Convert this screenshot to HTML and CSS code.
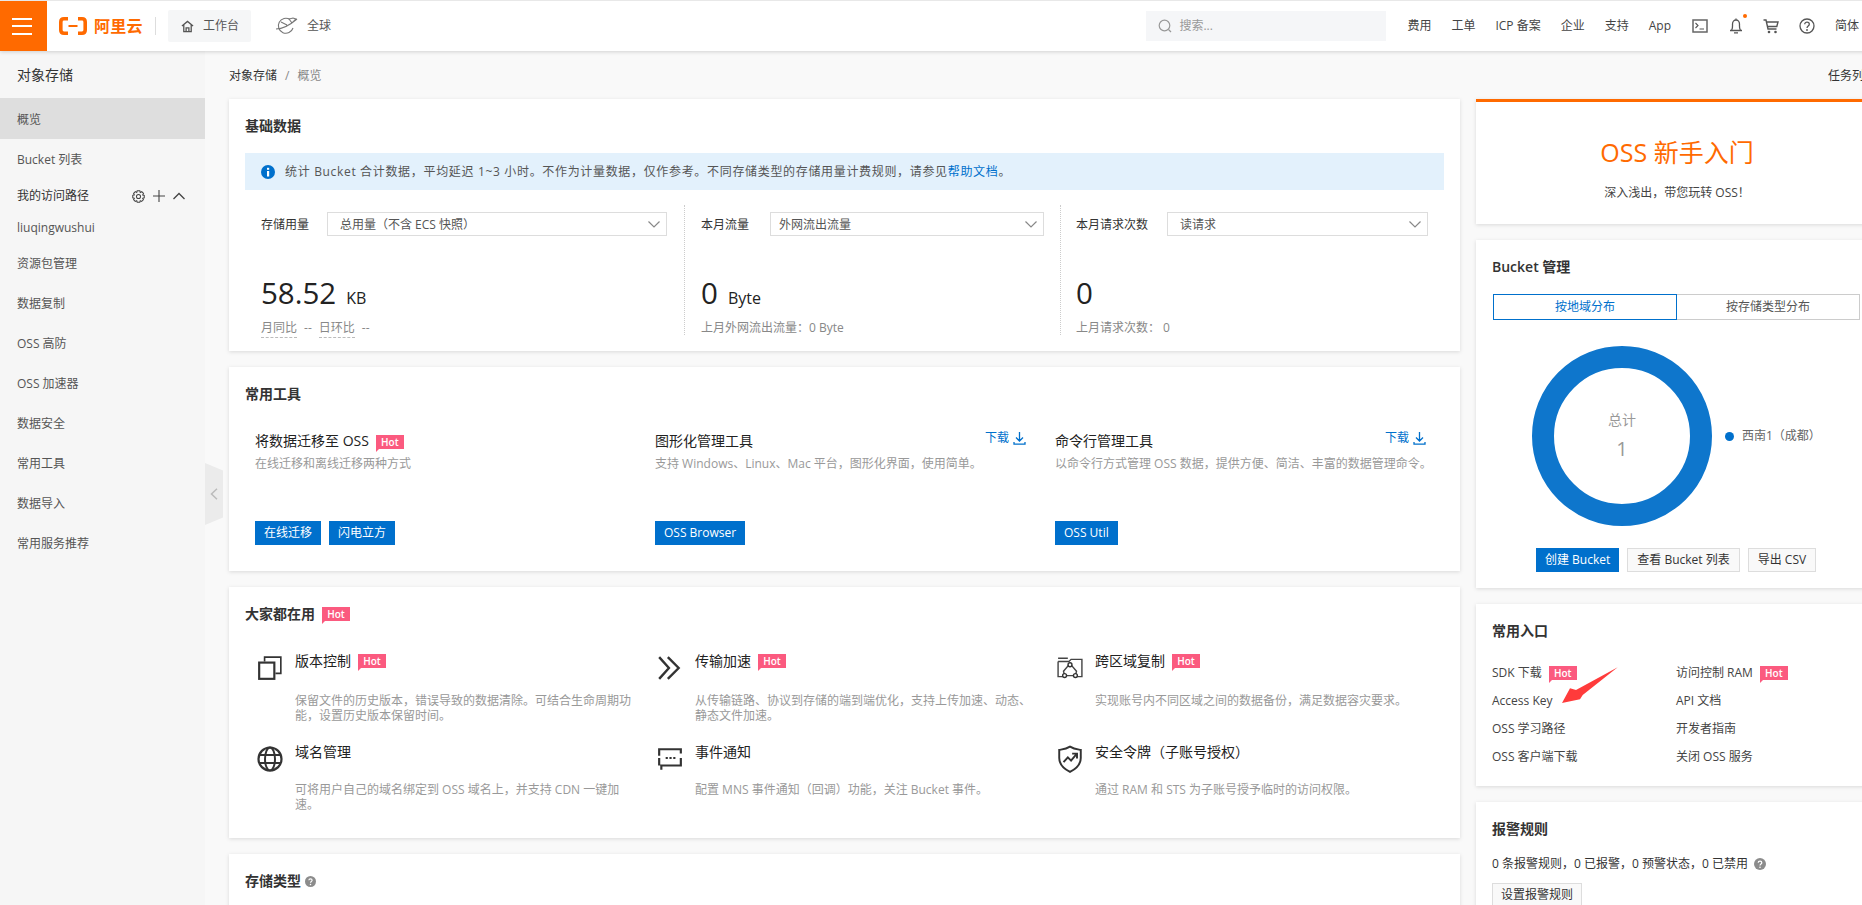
FILE: index.html
```html
<!DOCTYPE html>
<html lang="zh-CN">
<head>
<meta charset="utf-8">
<title>对象存储 - 概览</title>
<link rel="stylesheet" href="styles.css">
</head>
<body>
<header class="topbar">
  <div class="menu-btn"><i></i><i></i><i></i></div>
  <div class="logo">
    <svg class="logo-mark" viewBox="0 0 28 18" width="28" height="18"><path d="M9 1.800H5Q1.800 1.800 1.800 5V13Q1.800 16.200 5 16.200H9M19 1.800H23Q26.200 1.800 26.200 5V13Q26.200 16.200 23 16.200H19" fill="none" stroke="#ff6a00" stroke-width="3.600"/><rect x="9.500" y="8" width="9" height="2" fill="#ff6a00"/></svg>
    <span class="logo-text">阿里云</span>
  </div>
  <div class="logo-sep"></div>
  <div class="workbench">
    <svg viewBox="0 0 14 14" width="13" height="13"><path d="M1 6.500 7 1.500 13 6.500M3 5.500V12.500H11V5.500M5.500 12.500V8.500H8.500V12.500" fill="none" stroke="#555" stroke-width="1.400"/></svg>
    <span>工作台</span>
  </div>
  <div class="region">
    <svg viewBox="0 0 24 20" width="24" height="20"><path d="M15 3.500A7.500 7.500 0 1 0 18 12" fill="none" stroke="#777" stroke-width="1.100"/><path d="M1 13C7 13 15 9 22 3M6 6l6 3M14 3l3 4 4-4-3-1z" fill="none" stroke="#777" stroke-width="1.100"/></svg>
    <span>全球</span>
  </div>
  <div class="search">
    <svg viewBox="0 0 14 14" width="14" height="14"><circle cx="6.500" cy="6.500" r="5.300" fill="none" stroke="#999" stroke-width="1.200"/><path d="M10.500 10.500 13 13" stroke="#999" stroke-width="1.200"/></svg>
    <span>搜索...</span>
  </div>
  <nav class="topnav">
    <a>费用</a><a>工单</a><a>ICP 备案</a><a>企业</a><a>支持</a><a>App</a>
    <svg class="ti ti-term" viewBox="0 0 16 14" width="16" height="14"><rect x="1" y="1" width="14" height="12" fill="none" stroke="#666" stroke-width="1.500"/><path d="M3.500 4 6 6.500 3.500 9M7.500 10H12" fill="none" stroke="#555" stroke-width="1.100"/></svg>
    <span class="bell">
      <svg viewBox="0 0 14 16" width="14" height="16"><path d="M1 12.500H13M2.500 12.500C4 10 3.500 8 3.500 6A3.500 4 0 0 1 10.500 6C10.500 8 10 10 11.500 12.500M5 14.800H9M7 .5V2" fill="none" stroke="#555" stroke-width="1.300"/></svg>
      <i class="bell-dot"></i>
    </span>
    <svg class="ti ti-cart" viewBox="0 0 16 15" width="16" height="15"><path d="M.5 1H3L5 10H13.500M3.500 3H15L13.800 7.500H4.500" fill="none" stroke="#555" stroke-width="1.400"/><circle cx="6" cy="13" r="1.300" fill="#555"/><circle cx="12.500" cy="13" r="1.300" fill="#555"/></svg>
    <svg class="ti ti-help" viewBox="0 0 16 16" width="16" height="16"><circle cx="8" cy="8" r="7" fill="none" stroke="#555" stroke-width="1.300"/><path d="M5.700 6.200C5.700 3.500 10.300 3.500 10.300 6.200C10.300 8 8 8 8 10" fill="none" stroke="#555" stroke-width="1.300"/><circle cx="8" cy="12" r=".9" fill="#555"/></svg>
    <a class="lang">简体</a>
  </nav>
</header>

<div class="shell">
  <aside class="sidebar">
    <div class="side-title">对象存储</div>
    <div class="side-active">概览</div>
    <div class="side-bucket">Bucket 列表</div>
    <div class="side-path">
      <span>我的访问路径</span>
      <span class="side-tools">
        <svg viewBox="0 0 14 14" width="13" height="13"><path d="M5.600.8H8.400L8.900 2.600 10.500 1.800 12.400 3.700 11.500 5.300 13.200 5.800V8.400L11.500 8.900 12.300 10.500 10.400 12.300 8.900 11.500 8.400 13.200H5.600L5.100 11.500 3.500 12.300 1.700 10.400 2.500 8.900.8 8.400V5.700L2.500 5.200 1.700 3.600 3.600 1.700 5.100 2.600Z" fill="none" stroke="#444" stroke-width="1.100"/><circle cx="7" cy="7" r="2.200" fill="none" stroke="#444" stroke-width="1.100"/></svg>
        <svg viewBox="0 0 12 12" width="12" height="12"><path d="M6 0V12M0 6H12" stroke="#444" stroke-width="1.100"/></svg>
        <svg viewBox="0 0 12 8" width="12" height="8"><path d="M.5 7 6 1.500 11.500 7" fill="none" stroke="#444" stroke-width="1.300"/></svg>
      </span>
    </div>
    <div class="side-user">liuqingwushui</div>
    <div class="side-item">资源包管理</div>
    <div class="side-item">数据复制</div>
    <div class="side-item">OSS 高防</div>
    <div class="side-item">OSS 加速器</div>
    <div class="side-item">数据安全</div>
    <div class="side-item">常用工具</div>
    <div class="side-item">数据导入</div>
    <div class="side-item">常用服务推荐</div>
    <div class="collapse">
      <svg viewBox="0 0 8 12" width="8" height="12"><path d="M7 .8 1.500 6 7 11.200" fill="none" stroke="#bbb" stroke-width="1.500"/></svg>
    </div>
  </aside>

  <main class="main">
    <div class="crumbs">
      <div><span>对象存储</span><span class="crumb-sep">/</span><span class="crumb-now">概览</span></div>
      <span>任务列表</span>
    </div>
    <div class="columns">
      <div class="col-left">
        <section class="card">
          <h2 class="card-title">基础数据</h2>
          <div class="alert">
            <svg viewBox="0 0 14 14" width="14" height="14"><circle cx="7" cy="7" r="7" fill="#0070cc"/><rect x="6" y="6" width="2.200" height="5.500" fill="#fff"/><rect x="6" y="2.800" width="2.200" height="2" fill="#fff"/></svg>
            <span class="alert-text">统计 Bucket 合计数据，平均延迟 1~3 小时。不作为计量数据，仅作参考。不同存储类型的存储用量计费规则，请参见<a class="link">帮助文档</a>。</span>
          </div>
          <div class="stats">
            <div class="stat stat-a">
              <div class="stat-head">
                <span class="stat-label label-a">存储用量</span>
                <div class="select"><span>总用量（不含 ECS 快照）</span><svg viewBox="0 0 12 7" width="12" height="7"><path d="M.5.5 6 6 11.500.5" fill="none" stroke="#888" stroke-width="1.200"/></svg></div>
              </div>
              <div class="stat-num">58.52<small>KB</small></div>
              <div class="stat-sub"><u>月同比</u><span class="dash">--</span><u>日环比</u><span class="dash">--</span></div>
            </div>
            <div class="stat stat-b">
              <div class="stat-head">
                <span class="stat-label label-b">本月流量</span>
                <div class="select select-b"><span>外网流出流量</span><svg viewBox="0 0 12 7" width="12" height="7"><path d="M.5.5 6 6 11.500.5" fill="none" stroke="#888" stroke-width="1.200"/></svg></div>
              </div>
              <div class="stat-num">0<small>Byte</small></div>
              <div class="stat-sub">上月外网流出流量：0 Byte</div>
            </div>
            <div class="stat stat-c">
              <div class="stat-head">
                <span class="stat-label label-c">本月请求次数</span>
                <div class="select"><span>读请求</span><svg viewBox="0 0 12 7" width="12" height="7"><path d="M.5.5 6 6 11.500.5" fill="none" stroke="#888" stroke-width="1.200"/></svg></div>
              </div>
              <div class="stat-num">0</div>
              <div class="stat-sub">上月请求次数： 0</div>
            </div>
          </div>
        </section>

        <section class="card">
          <h2 class="card-title">常用工具</h2>
          <div class="tools">
            <div class="tool">
              <div class="tool-head"><span class="tool-name">将数据迁移至 OSS<span class="hot">Hot</span></span></div>
              <p class="tool-desc">在线迁移和离线迁移两种方式</p>
              <div class="tool-btns"><a class="btn btn-primary">在线迁移</a><a class="btn btn-primary">闪电立方</a></div>
            </div>
            <div class="tool">
              <div class="tool-head"><span class="tool-name">图形化管理工具</span><a class="dl">下载<svg viewBox="0 0 13 13" width="13" height="13"><path d="M6.500 0V8.500M3 5.500 6.500 9 10 5.500M1 10V12.200H12V10" fill="none" stroke="#0070cc" stroke-width="1.300"/></svg></a></div>
              <p class="tool-desc">支持 Windows、Linux、Mac 平台，图形化界面，使用简单。</p>
              <div class="tool-btns"><a class="btn btn-primary">OSS Browser</a></div>
            </div>
            <div class="tool">
              <div class="tool-head"><span class="tool-name">命令行管理工具</span><a class="dl">下载<svg viewBox="0 0 13 13" width="13" height="13"><path d="M6.500 0V8.500M3 5.500 6.500 9 10 5.500M1 10V12.200H12V10" fill="none" stroke="#0070cc" stroke-width="1.300"/></svg></a></div>
              <p class="tool-desc">以命令行方式管理 OSS 数据，提供方便、简洁、丰富的数据管理命令。</p>
              <div class="tool-btns"><a class="btn btn-primary">OSS Util</a></div>
            </div>
          </div>
        </section>

        <section class="card card-features">
          <h2 class="card-title">大家都在用<span class="hot">Hot</span></h2>
          <div class="features">
            <div class="feature">
              <svg class="f-icon" viewBox="0 0 24 24" width="24" height="24"><rect x="2" y="7" width="14" height="15" fill="none" stroke="#333" stroke-width="2"/><path d="M7 6V2H22V17H17" fill="none" stroke="#333" stroke-width="1.500"/></svg>
              <div class="f-body"><div class="f-name">版本控制<span class="hot">Hot</span></div><p class="f-desc">保留文件的历史版本，错误导致的数据清除。可结合生命周期功能，设置历史版本保留时间。</p></div>
            </div>
            <div class="feature">
              <svg class="f-icon" viewBox="0 0 24 24" width="24" height="24"><path d="M2 2 11 12 2 22M10 2 20 12 10 22" fill="none" stroke="#333" stroke-width="2.200"/></svg>
              <div class="f-body"><div class="f-name">传输加速<span class="hot">Hot</span></div><p class="f-desc">从传输链路、协议到存储的端到端优化，支持上传加速、动态、静态文件加速。</p></div>
            </div>
            <div class="feature">
              <svg class="f-icon" viewBox="0 0 24 24" width="24" height="24"><path d="M1 3H10M1 6H11L13 4H23V20H18M6 20H1V6" fill="none" stroke="#444" stroke-width="1.300"/><path d="M12 8 18 15 17 19H7L6 15Z" fill="none" stroke="#444" stroke-width="1.300"/><circle cx="12" cy="9" r="1.800" fill="#fff" stroke="#333" stroke-width="1.300"/><circle cx="7" cy="19" r="1.800" fill="#fff" stroke="#333" stroke-width="1.300"/><circle cx="17" cy="19" r="1.800" fill="#fff" stroke="#333" stroke-width="1.300"/></svg>
              <div class="f-body"><div class="f-name">跨区域复制<span class="hot">Hot</span></div><p class="f-desc">实现账号内不同区域之间的数据备份，满足数据容灾要求。</p></div>
            </div>
            <div class="feature feature-low">
              <svg class="f-icon" viewBox="0 0 26 26" width="26" height="26"><circle cx="13" cy="13" r="11.500" fill="none" stroke="#333" stroke-width="2.200"/><ellipse cx="13" cy="13" rx="5" ry="11.500" fill="none" stroke="#333" stroke-width="2"/><path d="M2 9H24M2 17H24" stroke="#333" stroke-width="2"/></svg>
              <div class="f-body"><div class="f-name">域名管理</div><p class="f-desc">可将用户自己的域名绑定到 OSS 域名上，并支持 CDN 一键加速。</p></div>
            </div>
            <div class="feature feature-low">
              <svg class="f-icon" viewBox="0 0 24 24" width="24" height="24"><path d="M2 9V3H22V7M22 11V18H4V22M2 11V18" fill="none" stroke="#333" stroke-width="2"/><path d="M8 11H10M11.500 11H13.500M15 11H17" stroke="#333" stroke-width="1.800"/></svg>
              <div class="f-body"><div class="f-name">事件通知</div><p class="f-desc">配置 MNS 事件通知（回调）功能，关注 Bucket 事件。</p></div>
            </div>
            <div class="feature feature-low">
              <svg class="f-icon" viewBox="0 0 24 26" width="24" height="26"><path d="M12 1.500C8 4 5 4 2 4.500V12C2 18 7 22.500 12 25C17 22.500 22 18 22 12V4.500C19 4 16 4 12 1.500Z" fill="none" stroke="#333" stroke-width="1.800"/><path d="M6 16 10 11.500 13 14.500 18 8.500M14 8H18.500V12.500" fill="none" stroke="#333" stroke-width="1.800"/></svg>
              <div class="f-body"><div class="f-name">安全令牌（子账号授权）</div><p class="f-desc">通过 RAM 和 STS 为子账号授予临时的访问权限。</p></div>
            </div>
          </div>
        </section>

        <section class="card card-types">
          <h2 class="card-title">存储类型<svg class="q-icon" viewBox="0 0 12 12" width="11" height="11"><circle cx="6" cy="6" r="6" fill="#8c8c8c"/><path d="M4.200 4.700C4.200 2.600 7.800 2.600 7.800 4.700C7.800 6 6 6 6 7.400" fill="none" stroke="#fff" stroke-width="1.200"/><circle cx="6" cy="9.200" r=".8" fill="#fff"/></svg></h2>
        </section>
      </div>

      <div class="col-right">
        <section class="card card-hero">
          <div class="hero-title">OSS 新手入门</div>
          <div class="hero-sub">深入浅出，带您玩转 OSS！</div>
        </section>

        <section class="card">
          <h2 class="card-title">Bucket 管理</h2>
          <div class="tabs"><span class="tab tab-on">按地域分布</span><span class="tab">按存储类型分布</span></div>
          <div class="chart">
            <div class="donut"><span class="donut-label">总计</span><span class="donut-num">1</span></div>
            <div class="legend"><i></i>西南1（成都）</div>
          </div>
          <div class="bucket-btns"><a class="btn btn-primary">创建 Bucket</a><a class="btn btn-plain">查看 Bucket 列表</a><a class="btn btn-plain">导出 CSV</a></div>
        </section>

        <section class="card card-entry">
          <h2 class="card-title">常用入口</h2>
          <div class="entries">
            <a>SDK 下载<span class="hot">Hot</span></a><a>访问控制 RAM<span class="hot">Hot</span></a>
            <a>Access Key</a><a>API 文档</a>
            <a>OSS 学习路径</a><a>开发者指南</a>
            <a>OSS 客户端下载</a><a>关闭 OSS 服务</a>
          </div>
          <svg class="red-arrow" viewBox="0 0 60 42" width="60" height="42"><polygon points="2,39 10,24.300 16,26 57.700,3.300 22.700,31 20,35.300" fill="#ff3b3b"/></svg>
        </section>

        <section class="card">
          <h2 class="card-title">报警规则</h2>
          <div class="alarm">0 条报警规则，0 已报警，0 预警状态，0 已禁用<svg class="q-icon" viewBox="0 0 12 12" width="12" height="12"><circle cx="6" cy="6" r="6" fill="#8c8c8c"/><path d="M4.200 4.700C4.200 2.600 7.800 2.600 7.800 4.700C7.800 6 6 6 6 7.400" fill="none" stroke="#fff" stroke-width="1.200"/><circle cx="6" cy="9.200" r=".8" fill="#fff"/></svg></div>
          <a class="btn btn-plain">设置报警规则</a>
        </section>
      </div>
    </div>
  </main>
</div>
</body>
</html>
```

FILE: styles.css
```css
* { box-sizing: border-box; }
html, body { margin: 0; height: 905px; overflow: hidden; }
body {
  width: 1862px;
  background: #f9f9f9;
  color: #333;
  font: 12px/20px "Open Sans", "Noto Sans CJK SC", sans-serif;
}
p, h2 { margin: 0; }

/* top bar */
.topbar {
  position: relative;
  z-index: 2;
  display: flex;
  align-items: center;
  width: 1880px;
  height: 51px;
  padding-right: 21px;
  background: #fff;
  border-top: 1px solid #e8e8e8;
  box-shadow: 0 1px 4px rgba(0,0,0,.16);
}
.menu-btn {
  display: flex;
  flex-direction: column;
  justify-content: center;
  gap: 5.500px;
  width: 47px;
  height: 50px;
  padding-left: 12px;
  background: #ff6a00;
}
.menu-btn i { display: block; width: 20px; height: 2px; background: #fff; }
.logo { display: flex; align-items: center; margin-left: 12px; gap: 7px; }
.logo-text { color: #ff6a00; font-size: 16px; font-weight: 700; line-height: 20px; letter-spacing: .3px; }
.logo-sep { width: 1px; height: 18px; margin-left: 12px; background: #ddd; }
.workbench {
  display: flex;
  align-items: center;
  gap: 9px;
  width: 83px;
  height: 32px;
  margin-left: 12px;
  padding-left: 13px;
  border-radius: 2px;
  background: #f5f6f7;
  color: #555;
}
.region { display: flex; align-items: center; gap: 8px; margin-left: 24px; color: #555; }
.search {
  display: flex;
  align-items: center;
  gap: 7px;
  width: 240px;
  height: 30px;
  margin-left: auto;
  padding-left: 12px;
  background: #f5f6f8;
  color: #999;
}
.topnav { display: flex; align-items: center; gap: 20px; margin-left: 21px; color: #444; white-space: nowrap; }
.ti { display: block; }
.ti-term { margin-left: 1px; }
.bell { position: relative; display: block; height: 16px; margin-left: 1px; }
.bell svg { display: block; }
.bell-dot { position: absolute; top: -4px; right: -4px; width: 4px; height: 4px; border-radius: 50%; background: #ff6a00; }

/* shell */
.shell { display: flex; height: 854px; }
.sidebar { position: relative; flex: none; width: 205px; background: #f6f6f6; color: #555; }
.side-title { height: 47px; padding-left: 17px; color: #333; font-size: 14px; line-height: 48px; }
.side-active { height: 41px; padding-left: 17px; background: #dedede; line-height: 43px; }
.side-bucket { height: 41px; padding-left: 17px; line-height: 41px; }
.side-path { display: flex; align-items: center; justify-content: space-between; height: 32px; padding: 0 20px 0 17px; color: #333; }
.side-tools { display: flex; align-items: center; gap: 8px; }
.side-user { height: 32px; padding-left: 17px; line-height: 32px; }
.side-item { height: 40px; padding-left: 17px; line-height: 40px; }
.collapse {
  position: absolute;
  top: 412px;
  left: 205px;
  display: flex;
  align-items: center;
  justify-content: center;
  width: 18px;
  height: 62px;
  background: #ebebeb;
  clip-path: polygon(0 0, 100% 12%, 100% 88%, 0 100%);
}

/* main */
.main { flex: none; width: 1673px; padding-left: 24px; }
.crumbs { display: flex; align-items: center; justify-content: space-between; height: 48px; padding: 2px 2px 0 0; }
.crumb-sep { margin: 0 8px; color: #888; }
.crumb-now { color: #888; }
.columns { display: flex; gap: 16px; }
.col-left { flex: none; width: 1231px; }
.col-right { flex: none; width: 402px; }
.card {
  position: relative;
  margin-bottom: 16px;
  padding: 16px;
  background: #fff;
  box-shadow: 0 1px 4px rgba(0,0,0,.13);
}
.card-title { display: flex; align-items: center; height: 22px; color: #333; font-size: 14px; font-weight: 600; line-height: 22px; }

/* hot tag */
.hot {
  position: relative;
  display: inline-block;
  flex: none;
  width: 28px;
  height: 14px;
  margin-left: 7px;
  background: #fb5a7f;
  color: #fff;
  font-size: 10px;
  font-weight: 600;
  line-height: 14px;
  text-align: center;
  vertical-align: middle;
}
.hot::after {
  content: "";
  position: absolute;
  top: 14px;
  left: 0;
  border-top: 3px solid #fb5a7f;
  border-right: 3px solid transparent;
}

/* basic data */
.alert {
  display: flex;
  align-items: center;
  gap: 10px;
  height: 37px;
  margin-top: 16px;
  padding-left: 16px;
  background: #e3f1fc;
  color: #555;
}
.alert-text { letter-spacing: .67px; }
.link { color: #0070cc; }
.stats { display: flex; height: 130px; margin-top: 15px; margin-bottom: 0; }
.stat { flex: none; padding-top: 7px; }
.stat-a { width: 440px; padding-left: 16px; padding-right: 17px; border-right: 1px dotted #ccc; }
.stat-b { width: 376px; padding-left: 16px; padding-right: 16px; border-right: 1px dotted #ccc; }
.stat-c { width: 383px; padding-left: 15px; padding-right: 16px; }
.stat-head { display: flex; align-items: center; height: 24px; }
.stat-label { flex: none; padding-top: 1px; color: #333; }
.label-a { width: 66px; }
.label-b { width: 69px; }
.label-c { width: 91px; }
.select {
  display: flex;
  flex: 1;
  align-items: center;
  justify-content: space-between;
  height: 24px;
  padding: 1px 6px 0 12px;
  border: 1px solid #ddd;
  color: #555;
}
.select-b { padding-left: 8px; }
.stat-num { height: 40px; margin-top: 37px; color: #222; font-size: 29.500px; line-height: 40px; }
.stat-num small { margin-left: 10px; font-size: 16px; }
.stat-sub { margin-top: 6px; color: #888; line-height: 18px; }
.stat-sub u { padding-bottom: 1px; border-bottom: 1px dashed #bbb; text-decoration: none; }
.dash { margin: 0 7px; }

/* tools */
.tools { display: grid; grid-template-columns: repeat(3, 371px); column-gap: 29px; margin-top: 25px; padding-left: 10px; }
.tool-head { display: flex; align-items: flex-start; justify-content: space-between; height: 22px; }
.tool-name { font-size: 14px; line-height: 22px; color: #222; }
.dl { display: flex; align-items: center; gap: 4px; color: #0070cc; line-height: 16px; }
.tool-desc { margin-top: 2px; color: #999; white-space: nowrap; }
.tool-btns { display: flex; gap: 8px; margin-top: 47px; padding-bottom: 10px; }
.btn { display: inline-block; height: 24px; padding: 0 9px; line-height: 22px; white-space: nowrap; }
.btn-primary { padding: 1px 9px; background: #0070cc; color: #fff; }
.btn-plain { border: 1px solid #ddd; background: #f9f9f9; color: #333; }

/* features */
.card-features { height: 251px; }
.features { display: grid; grid-template-columns: repeat(3, 400px); grid-auto-rows: 91px; margin-top: 25px; padding-left: 10px; }
.feature { display: flex; }
.f-icon { flex: none; width: 40px; height: 28px; margin-top: 4px; padding: 0 12px 0 2px; }
.f-name { display: flex; align-items: center; height: 22px; color: #222; font-size: 14px; line-height: 22px; }
.f-body { width: 342px; }
.f-desc { margin-top: 21px; color: #999; line-height: 15px; }
.feature-low .f-desc { margin-top: 19px; }

/* storage types */
.card-types { height: 120px; }
.q-icon { flex: none; margin-left: 4px; }

/* right column */
.card-hero { height: 125px; padding-top: 0; border-top: 3px solid #ff6a00; text-align: center; }
.hero-title { padding-top: 32px; color: #ff6a00; font-size: 25px; line-height: 36px; }
.hero-sub { margin-top: 13px; color: #444; }
.tabs { display: flex; width: 367px; height: 26px; margin: 16px 0 0 1px; }
.tab { flex: 1; border: 1px solid #ccc; border-left: 0; color: #555; line-height: 24px; text-align: center; }
.tab-on { border: 1px solid #0070cc; color: #0070cc; }
.chart { display: flex; align-items: center; margin: 26px 0 0 40px; }
.donut {
  display: flex;
  flex: none;
  flex-direction: column;
  align-items: center;
  justify-content: center;
  width: 180px;
  height: 180px;
  border: 22.500px solid #0e76cc;
  border-radius: 50%;
  color: #999;
}
.donut-label { font-size: 14px; line-height: 20px; }
.donut-num { margin-top: 6px; font-size: 20px; line-height: 26px; }
.legend { display: flex; align-items: center; gap: 8px; margin-left: 13px; color: #666; }
.legend i { width: 9px; height: 9px; border-radius: 50%; background: #0070cc; }
.bucket-btns { display: flex; gap: 8px; margin: 22px 0 0 44px; }
.card-entry { padding-bottom: 15px; }
.entries { display: grid; grid-template-columns: 184px 184px; grid-auto-rows: 28px; margin-top: 17px; color: #444; }
.entries a { display: flex; align-items: center; }
.red-arrow { position: absolute; top: 60px; left: 84px; }
.alarm { display: flex; align-items: center; margin-top: 13px; line-height: 22px; }
.alarm .q-icon { margin-left: 6px; }
.alarm + .btn { margin-top: 8px; padding: 0 8px; }
```
